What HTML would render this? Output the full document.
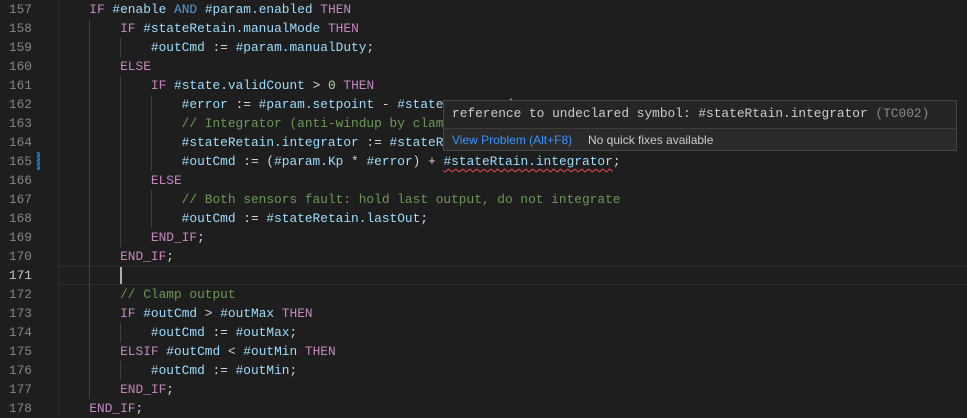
<!DOCTYPE html>
<html><head><meta charset="utf-8"><style>
html,body{margin:0;padding:0;width:967px;height:417px;overflow:hidden;background:#1e1e1e;}
.ln{position:absolute;left:0;width:32px;text-align:right;font:12.83px "Liberation Mono",monospace;color:#858585;line-height:19px;}
.code{position:absolute;left:58.5px;top:0;font:12.83px "Liberation Mono",monospace;line-height:19px;color:#d4d4d4;white-space:pre;}
.k{color:#c586c0}.b{color:#569cd6}.v{color:#9cdcfe}.c{color:#6a9955}.n{color:#b5cea8}
.g{position:absolute;width:1px;background:#404040;}
.sq{text-decoration:underline wavy #f14c4c;text-underline-offset:3px;text-decoration-thickness:1px}
</style></head><body>
<div style="position:absolute;left:58px;top:0;width:1px;height:417px;background:#2e2e2e"></div>
<div style="position:absolute;left:59px;top:266px;right:0;height:17px;border-top:1px solid #2c2c2c;border-bottom:1px solid #2c2c2c"></div>
<div class="g" style="left:89px;top:19px;height:380px"></div>
<div class="g" style="left:120px;top:38px;height:19px"></div>
<div class="g" style="left:120px;top:76px;height:171px"></div>
<div class="g" style="left:120px;top:323px;height:19px"></div>
<div class="g" style="left:120px;top:361px;height:19px"></div>
<div class="g" style="left:151px;top:95px;height:76px"></div>
<div class="g" style="left:151px;top:190px;height:38px"></div>
<div style="position:absolute;left:37px;top:152px;width:3px;height:18px;background:repeating-linear-gradient(135deg,#1a85e0 0 1.5px,#0d4f8a 1.5px 3px)"></div>
<div style="position:absolute;left:120px;top:267px;width:2px;height:17px;background:#aeafad"></div>
<div class="ln" style="top:0">157<br>158<br>159<br>160<br>161<br>162<br>163<br>164<br>165<br>166<br>167<br>168<br>169<br>170<br><span style="color:#c6c6c6">171</span><br>172<br>173<br>174<br>175<br>176<br>177<br>178</div>
<div class="code">    <span class="k">IF</span> <span class="v">#enable</span> <span class="b">AND</span> <span class="v">#param.enabled</span> <span class="k">THEN</span>
        <span class="k">IF</span> <span class="v">#stateRetain.manualMode</span> <span class="k">THEN</span>
            <span class="v">#outCmd</span> := <span class="v">#param.manualDuty</span>;
        <span class="k">ELSE</span>
            <span class="k">IF</span> <span class="v">#state.validCount</span> &gt; <span class="n">0</span> <span class="k">THEN</span>
                <span class="v">#error</span> := <span class="v">#param.setpoint</span> - <span class="v">#state.measured</span>;
                <span class="c">// Integrator (anti-windup by clamp)</span>
                <span class="v">#stateRetain.integrator</span> := <span class="v">#stateRetain.integrator</span>;
                <span class="v">#outCmd</span> := (<span class="v">#param.Kp</span> * <span class="v">#error</span>) + <span class="v sq">#stateRtain.integrator</span>;
            <span class="k">ELSE</span>
                <span class="c">// Both sensors fault: hold last output, do not integrate</span>
                <span class="v">#outCmd</span> := <span class="v">#stateRetain.lastOut</span>;
            <span class="k">END_IF</span>;
        <span class="k">END_IF</span>;

        <span class="c">// Clamp output</span>
        <span class="k">IF</span> <span class="v">#outCmd</span> &gt; <span class="v">#outMax</span> <span class="k">THEN</span>
            <span class="v">#outCmd</span> := <span class="v">#outMax</span>;
        <span class="k">ELSIF</span> <span class="v">#outCmd</span> &lt; <span class="v">#outMin</span> <span class="k">THEN</span>
            <span class="v">#outCmd</span> := <span class="v">#outMin</span>;
        <span class="k">END_IF</span>;
    <span class="k">END_IF</span>;</div>
<div style="position:absolute;left:443px;top:100px;width:514px;height:51px;background:#252526;border:1px solid #454545;box-sizing:border-box;">
<div style="position:absolute;left:8px;top:5px;font:12.83px 'Liberation Mono',monospace;color:#cccccc;white-space:pre">reference to undeclared symbol: #stateRtain.integrator <span style="color:#8a8a8a">(TC002)</span></div>
<div style="position:absolute;left:0;right:0;top:27px;height:1px;background:#3c3c3c"></div>
<div style="position:absolute;left:0;right:0;top:28px;bottom:0;background:#2a2a2b"></div>
<div style="position:absolute;left:8px;top:32px;font:12px 'Liberation Sans',sans-serif;color:#3794ff;white-space:pre">View Problem (Alt+F8)</div>
<div style="position:absolute;left:144px;top:32px;font:12px 'Liberation Sans',sans-serif;color:#cccccc;white-space:pre">No quick fixes available</div>
</div>
</body></html>
